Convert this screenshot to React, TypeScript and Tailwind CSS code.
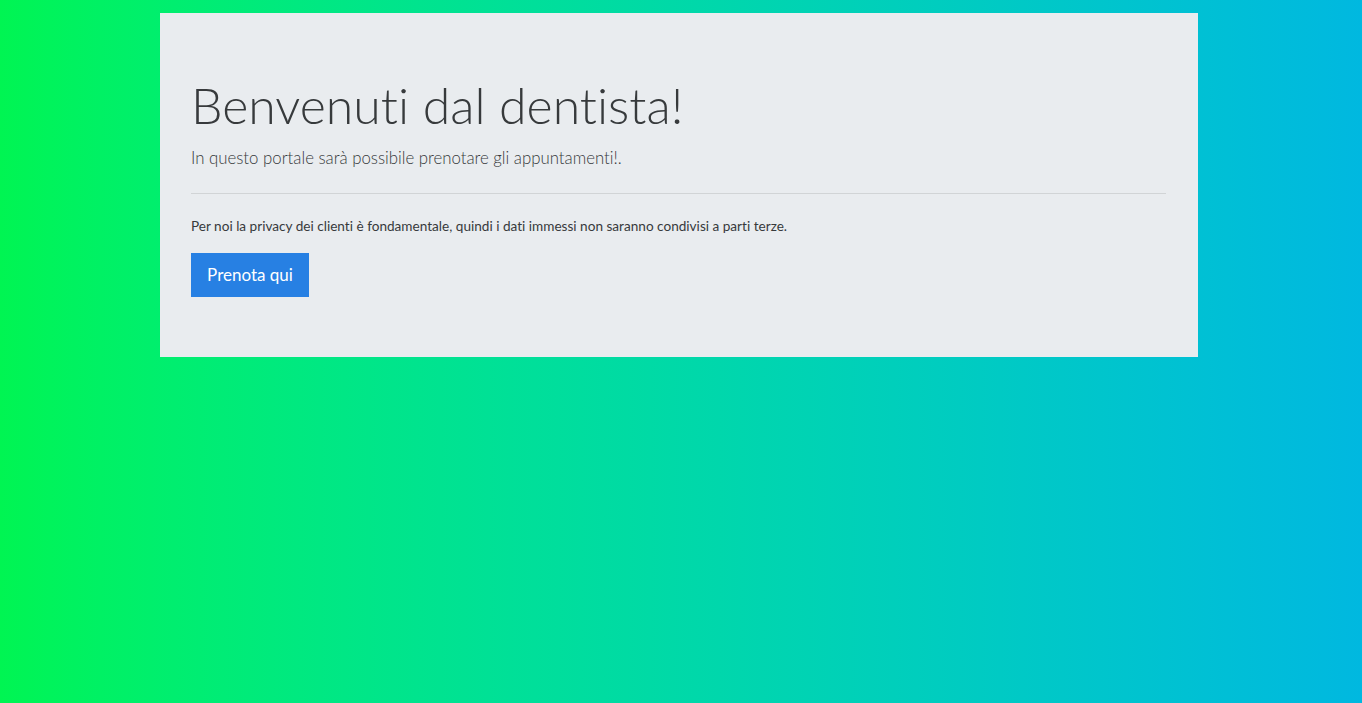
import React from 'react';

const App: React.FC = () => {
  return (
    <div className="min-h-[703px] w-full bg-gradient-to-r from-[#00f552] to-[#00b8e0] pt-[13px] font-['Lato',sans-serif] [font-variant-ligatures:none]">
      {/* Jumbotron */}
      <div className="ml-[160px] w-[1038px] bg-[#e9ecef] pl-[31px] pr-8 pt-[62px] pb-[60px]">
        <h1 className="text-[50px] font-light leading-[1.2] text-[#373a3c] mb-[10px]">
          Benvenuti dal dentista!
        </h1>
        <p className="text-[16.8px] leading-[1.5] font-light text-[#373a3c]">
          In questo portale sarà possibile prenotare gli appuntamenti!.
        </p>
        <hr className="mt-[23px] mb-[22px] border-t border-black/10" />
        <p className="text-[13.6px] leading-[1.5] text-[#373a3c] mb-4">
          Per noi la privacy dei clienti è fondamentale, quindi i dati immessi non saranno condivisi a parti terze.
        </p>
        <a href="#" className="inline-flex h-[44px] w-[118px] items-center justify-center bg-[#2780e3] text-[17px] text-white">
          Prenota qui
        </a>
      </div>
    </div>
  );
};

export default App;
